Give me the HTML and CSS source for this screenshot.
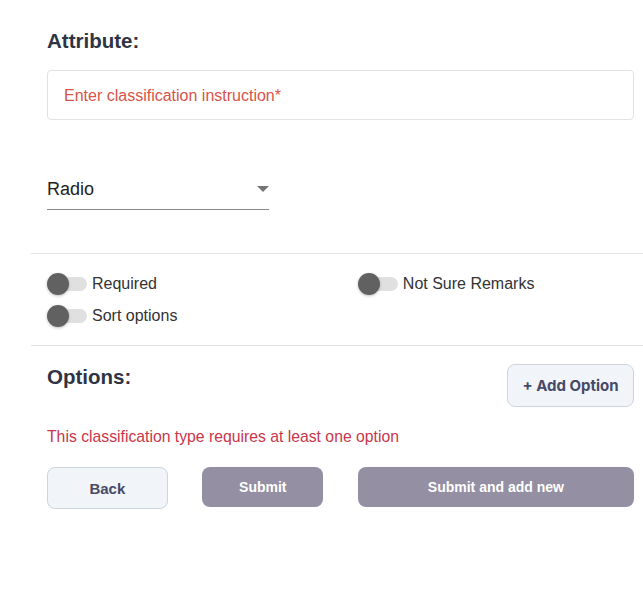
FILE: index.html
```html
<!DOCTYPE html>
<html>
<head>
<meta charset="utf-8">
<link rel="stylesheet" href="styles.css">
</head>
<body>
<div class="panel">
  <div class="section">
    <h2 class="title">Attribute:</h2>
    <div class="input-box"><span class="placeholder">Enter classification instruction*</span></div>
    <div class="select">
      <span class="select-value">Radio</span>
      <span class="arrow"></span>
    </div>
  </div>
  <div class="divider"></div>
  <div class="toggles">
    <label class="toggle span2"><span class="switch"><span class="thumb"></span></span><span class="tlabel">Required</span></label>
    <label class="toggle span2"><span class="switch"><span class="thumb"></span></span><span class="tlabel">Not Sure Remarks</span></label>
    <label class="toggle span2"><span class="switch"><span class="thumb"></span></span><span class="tlabel">Sort options</span></label>
  </div>
  <div class="divider"></div>
  <div class="section options">
    <div class="options-head">
      <h2 class="title">Options:</h2>
      <button class="btn light add">+ Add Option</button>
    </div>
    <p class="error">This classification type requires at least one option</p>
    <div class="actions">
      <button class="btn light">Back</button>
      <button class="btn muted">Submit</button>
      <button class="btn muted span2">Submit and add new</button>
    </div>
  </div>
</div>
</body>
</html>
```

FILE: styles.css
```css
html, body {
  margin: 0;
  padding: 0;
  background: #ffffff;
  overflow: hidden;
}
body {
  font-family: "Liberation Sans", Arial, sans-serif;
  color: #333333;
}
.panel {
  margin-left: 31px;
  width: 619px;
  padding-top: 28px;
}
.section {
  padding: 0 16px;
}
.title {
  margin: 0;
  font-size: 20.5px;
  font-weight: 700;
  color: #2e3443;
  line-height: 26px;
}
.input-box {
  margin-top: 16px;
  height: 48px;
  border: 1px solid #e2e2e2;
  border-radius: 4px;
  display: flex;
  align-items: center;
  padding: 0 16px;
}
.placeholder {
  color: #d9534a;
  font-size: 16px;
  margin-top: 1px;
}
.select {
  margin-top: 52px;
  width: 222px;
  height: 37px;
  border-bottom: 1px solid #8a8a8a;
  display: flex;
  align-items: center;
  justify-content: space-between;
  margin-bottom: 43px;
}
.select-value {
  font-size: 18px;
  color: #222222;
  margin-top: -2px;
}
.arrow {
  width: 0;
  height: 0;
  border-left: 6px solid transparent;
  border-right: 6px solid transparent;
  border-top: 6px solid #757575;
  margin-top: -4px;
}
.divider {
  height: 1px;
  background: #e3e3e3;
}
.toggles {
  padding: 19px 16px 18px;
  display: grid;
  grid-template-columns: repeat(4, 1fr);
  column-gap: 34.67px;
  row-gap: 10px;
}
.span2 {
  grid-column: span 2;
}
.toggle {
  display: flex;
  align-items: center;
  height: 22px;
}
.switch {
  position: relative;
  width: 40px;
  height: 22px;
  flex: none;
}
.switch::before {
  content: "";
  position: absolute;
  left: 4px;
  top: 4px;
  width: 36px;
  height: 14px;
  border-radius: 7px;
  background: #e0e0e0;
}
.thumb {
  position: absolute;
  left: 0;
  top: 0;
  width: 22px;
  height: 22px;
  border-radius: 50%;
  background: #616161;
  box-shadow: 0 1px 3px rgba(0, 0, 0, 0.25);
}
.tlabel {
  margin-left: 5px;
  font-size: 16px;
  color: #333333;
}
.options {
  padding-top: 18px;
}
.options-head {
  display: flex;
  justify-content: space-between;
  align-items: flex-start;
}
.options-head .title {
  margin-top: 0;
}
.btn {
  font-family: Inter, "Liberation Sans", sans-serif;
  font-weight: 700;
  border-radius: 8px;
  cursor: pointer;
}
.light {
  background: #f1f5f9;
  border: 1px solid #cdd4dc;
  color: #474a66;
  font-size: 15px;
}
.add {
  height: 43px;
  width: 127px;
  padding: 0;
}
.error {
  margin: 19px 0 0;
  font-size: 15.75px;
  color: #c9364a;
  line-height: 22px;
}
.actions {
  margin-top: 19px;
  display: grid;
  grid-template-columns: repeat(4, 1fr);
  column-gap: 34.67px;
  align-items: start;
}
.actions .light {
  height: 42px;
  font-family: "Liberation Sans", Arial, sans-serif;
}
.muted {
  height: 40px;
  background: #948fa3;
  border: none;
  color: #ffffff;
  font-family: "Liberation Sans", Arial, sans-serif;
  font-size: 14px;
}
```
